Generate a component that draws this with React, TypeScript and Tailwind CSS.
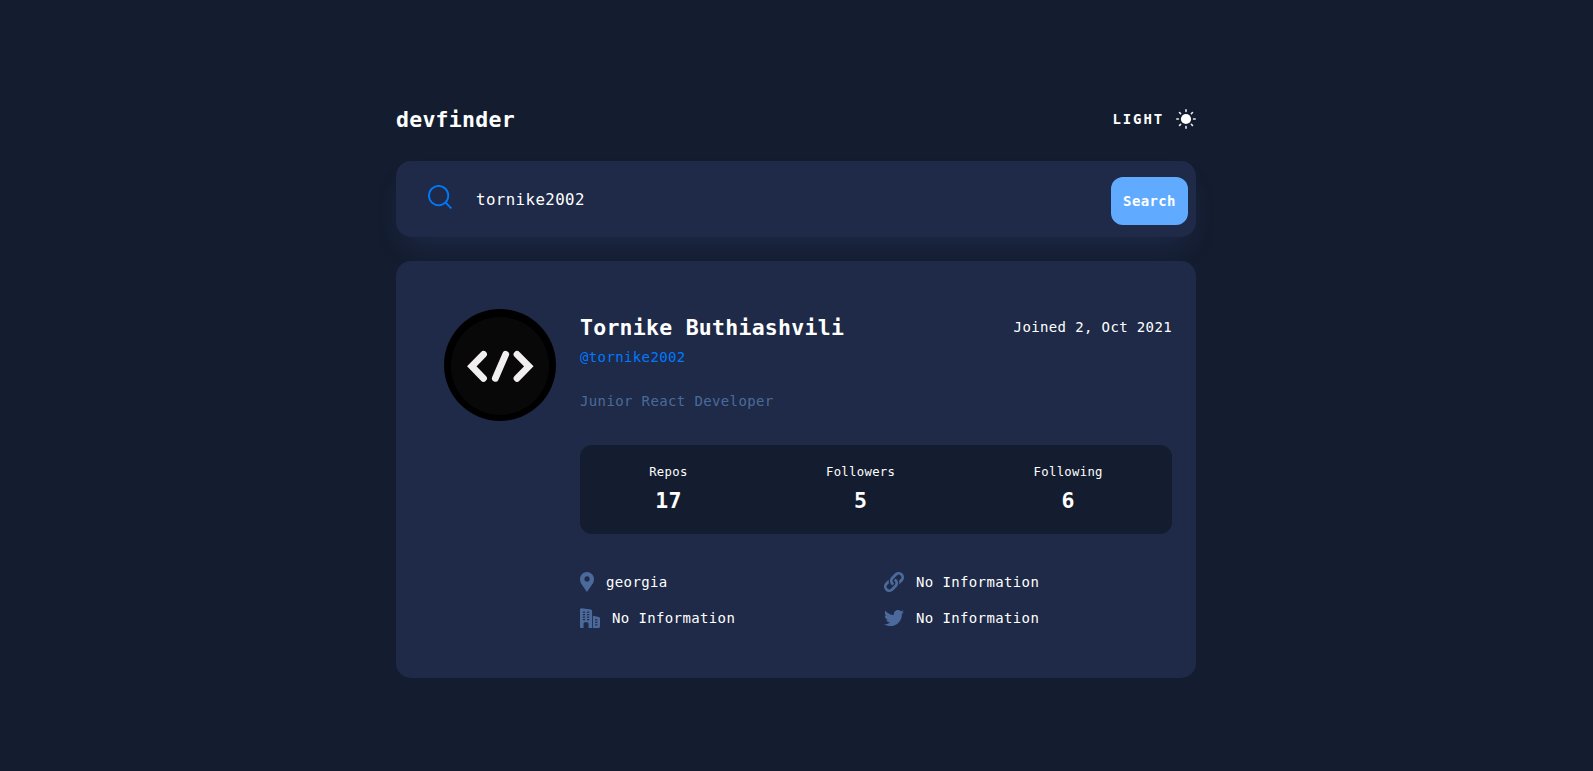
import React from "react";

const SunIcon = () => (
  <svg width="20" height="20" viewBox="0 0 20 20" className="shrink-0">
    <circle cx="10" cy="10" r="5.1" fill="#fff" />
    <g stroke="#fff" strokeOpacity="0.9" strokeWidth="1.6" strokeLinecap="round">
      <path d="M10 .8v1.6M10 17.6v1.6M.8 10h1.6M17.6 10h1.6M3.5 3.5l1.1 1.1M15.4 15.4l1.1 1.1M16.5 3.5l-1.1 1.1M4.6 15.4l-1.1 1.1" />
    </g>
  </svg>
);

const SearchIcon = () => (
  <svg width="24" height="24" viewBox="0 0 24 24" fill="none" stroke="#0079ff" strokeWidth="1.85" className="shrink-0">
    <circle cx="10.6" cy="10.6" r="9.7" />
    <path d="M17.4 17.4l6 6" />
  </svg>
);

const PinIcon = () => (
  <svg width="14" height="20" viewBox="0 0 14 20" fill="#4b6a9b">
    <path d="M12.06 2.19A6.98 6.98 0 007 0C5.08 0 3.24.8 1.94 2.19-.5 4.8-.66 9.03 1.61 12.31L6.88 20l5.39-7.69C14.66 9.03 14.5 4.8 12.06 2.19zM7.06 9.46a2.58 2.58 0 01-2.58-2.58A2.58 2.58 0 017.06 4.3a2.58 2.58 0 012.58 2.58 2.58 2.58 0 01-2.58 2.58z" />
  </svg>
);

const LinkIcon = () => (
  <svg width="20" height="20" viewBox="0 0 20 20" fill="#4b6a9b">
    <path d="M7.404 5.012c-2.355 2.437-1.841 6.482.857 8.273.089.06.208.048.283-.027.568-.555 1.049-1.093 1.47-1.776a.213.213 0 00-.084-.301A2.743 2.743 0 018.878 10.076a2.64 2.64 0 01-.223-1.803c.168-.815 1.043-1.573 1.711-2.274l-.004-.002 2.504-2.555a2.568 2.568 0 013.648-.019 2.6 2.6 0 01.037 3.666l-1.517 1.56a.266.266 0 00-.06.273c.35 1.012.435 2.44.201 3.519-.006.03.031.05.053.028l3.228-3.295c2.062-2.105 2.044-5.532-.038-7.615a5.416 5.416 0 00-7.691.04L7.417 4.998l-.013.014z" />
    <path d="M13.439 13.75a.401.401 0 00.006-.003c.659-1.204.788-2.586.48-3.933l-.002.002-.001-.001a5.434 5.434 0 00-2.19-3.124.3.3 0 00-.333.015c-.553.448-1.095 1.021-1.452 1.754a.243.243 0 00.096.317c.415.24.79.593 1.04 1.061h.001c.196.33.388.958.263 1.632-.116.894-1.019 1.714-1.736 2.453-.546.559-1.935 1.974-2.49 2.542a2.6 2.6 0 01-3.666.037 2.6 2.6 0 01-.038-3.666l1.521-1.564A.266.266 0 005 11.004c-.338-1.036-.43-2.432-.217-3.51.006-.03-.031-.049-.053-.027l-3.179 3.245c-2.083 2.126-2.066 5.588.04 7.693 2.125 2.083 5.57 2.048 7.653-.078.723-.81 3.821-3.678 4.195-4.577z" />
  </svg>
);

const BuildingIcon = () => (
  <svg width="20" height="20" viewBox="0 0 20 20" fill="#4b6a9b">
    <path d="M10.858 1.558L1.7.167A1.477 1.477 0 00.517.492 1.49 1.49 0 000 1.608v17.559c0 .458.375.833.833.833h2.709v-4.375c0-.808.65-1.458 1.458-1.458h2.083c.808 0 1.459.65 1.459 1.458V20h3.541V3a1.46 1.46 0 00-1.225-1.442zM4.583 12.292h-1.25a.625.625 0 010-1.25h1.25a.625.625 0 010 1.25zm0-2.5h-1.25a.625.625 0 010-1.25h1.25a.625.625 0 010 1.25zm0-2.5h-1.25a.625.625 0 010-1.25h1.25a.625.625 0 010 1.25zm0-2.5h-1.25a.625.625 0 010-1.25h1.25a.625.625 0 010 1.25zm4.167 7.5H7.5a.625.625 0 010-1.25h1.25a.625.625 0 010 1.25zm0-2.5H7.5a.625.625 0 010-1.25h1.25a.625.625 0 010 1.25zm0-2.5H7.5a.625.625 0 010-1.25h1.25a.625.625 0 010 1.25zm0-2.5H7.5a.625.625 0 010-1.25h1.25a.625.625 0 010 1.25zM18.85 9.035l-5.933-1.242V20h5.208A1.877 1.877 0 0020 18.125V10.46c0-.688-.47-1.274-1.15-1.425zM16.875 17.5h-1.25a.625.625 0 010-1.25h1.25a.625.625 0 010 1.25zm0-2.5h-1.25a.625.625 0 010-1.25h1.25a.625.625 0 010 1.25zm0-2.5h-1.25a.625.625 0 010-1.25h1.25a.625.625 0 010 1.25z" />
  </svg>
);

const TwitterIcon = () => (
  <svg width="20" height="20" viewBox="0 0 512 512" fill="#4b6a9b">
    <path d="M459.37 151.716c.325 4.548.325 9.097.325 13.645 0 138.72-105.583 298.558-298.558 298.558-59.452 0-114.68-17.219-161.137-47.106 8.447.974 16.568 1.299 25.34 1.299 49.055 0 94.213-16.568 130.274-44.832-46.132-.975-84.792-31.188-98.112-72.772 6.498.974 12.995 1.624 19.818 1.624 9.421 0 18.843-1.3 27.614-3.573-48.081-9.747-84.143-51.98-84.143-102.985v-1.299c13.969 7.797 30.214 12.67 47.431 13.319-28.264-18.843-46.781-51.005-46.781-87.391 0-19.492 5.197-37.36 14.294-52.954 51.655 63.675 129.3 105.258 216.365 109.807-1.624-7.797-2.599-15.918-2.599-24.04 0-57.828 46.782-104.934 104.934-104.934 30.213 0 57.502 12.67 76.67 33.137 23.715-4.548 46.456-13.32 66.599-25.34-7.798 24.366-24.366 44.833-46.132 57.827 21.117-2.273 41.584-8.122 60.426-16.243-14.292 20.791-32.161 39.308-52.628 54.253z" />
  </svg>
);

const Avatar = () => (
  <svg width="112" height="112" viewBox="0 0 112 112" className="shrink-0">
    <circle cx="56" cy="56" r="56" fill="#000" />
    <circle cx="56" cy="57" r="49" fill="#080808" />
    <g fill="none" stroke="#f1efef" strokeWidth="6.8" strokeLinecap="round" strokeLinejoin="miter">
      <path d="M39.5 45.3L27.8 57.3L39.5 69.3M73 45.3L84.8 57.3L73 69.3M61.7 45.3L51.3 69.3" />
    </g>
  </svg>
);

const stats = [
  { label: "Repos", value: 17 },
  { label: "Followers", value: 5 },
  { label: "Following", value: 6 },
];

const Info = ({ icon, children }: { icon: React.ReactNode; children: React.ReactNode }) => (
  <div className="flex h-5 items-center gap-3">
    {icon}
    <span>{children}</span>
  </div>
);

export default function App() {
  return (
    <div className="min-h-screen bg-[#141d2f] pt-[105px] pr-px font-['DejaVu_Sans_Mono',monospace] text-[14px] leading-5 tracking-[0.37px] text-white">
      <main className="mx-auto w-[800px]">
        <header className="flex h-7 items-center justify-between">
          <h1 className="pt-0.5 text-[21.5px] font-bold tracking-[0.26px]">devfinder</h1>
          <button className="flex items-center gap-3 font-bold tracking-[1.87px]">
            LIGHT
            <SunIcon />
          </button>
        </header>

        <form className="mt-7 flex h-[76px] items-center rounded-[15px] bg-[#1e2a47] pr-2 pl-8 shadow-[0_16px_30px_-10px_rgba(70,96,187,0.2)]">
          <span className="pb-1">
            <SearchIcon />
          </span>
          <input
            className="ml-6 min-w-0 flex-1 bg-transparent pt-0.5 text-[15.75px] tracking-[0.42px] outline-none"
            defaultValue="tornike2002"
          />
          <button
            type="button"
            className="mt-[4px] h-12 w-[77px] rounded-[12px] bg-[#60abff] font-bold"
          >
            Search
          </button>
        </form>

        <section className="mt-6 flex h-[417px] gap-6 rounded-[15px] bg-[#1e2a47] pt-12 pr-6 pl-12">
          <Avatar />
          <div className="min-w-0 flex-1">
            <div className="flex h-9 items-center justify-between">
              <h2 className="pt-0.5 text-[21.5px] font-bold tracking-[0.26px]">Tornike Buthiashvili</h2>
              <p>Joined 2, Oct 2021</p>
            </div>
            <p className="mt-0.5 text-[#0079ff]">@tornike2002</p>
            <p className="mt-6 text-[#4b6a9b]">Junior React Developer</p>
            <div className="mt-[34px] flex h-[89px] justify-around rounded-[12px] bg-[#141d2f] pt-[17px] text-center">
              {stats.map((s) => (
                <div key={s.label}>
                  <p className="text-[12.25px] tracking-[0.32px]">{s.label}</p>
                  <p className="mt-[3px] text-[21.5px] leading-8 font-bold tracking-[0.26px]">{s.value}</p>
                </div>
              ))}
            </div>
            <div className="mt-[38px] flex">
              <div className="flex w-[304px] flex-col gap-4">
                <Info icon={<PinIcon />}>georgia</Info>
                <Info icon={<BuildingIcon />}>No Information</Info>
              </div>
              <div className="flex flex-col gap-4">
                <Info icon={<LinkIcon />}>No Information</Info>
                <Info icon={<TwitterIcon />}>No Information</Info>
              </div>
            </div>
          </div>
        </section>
      </main>
    </div>
  );
}
